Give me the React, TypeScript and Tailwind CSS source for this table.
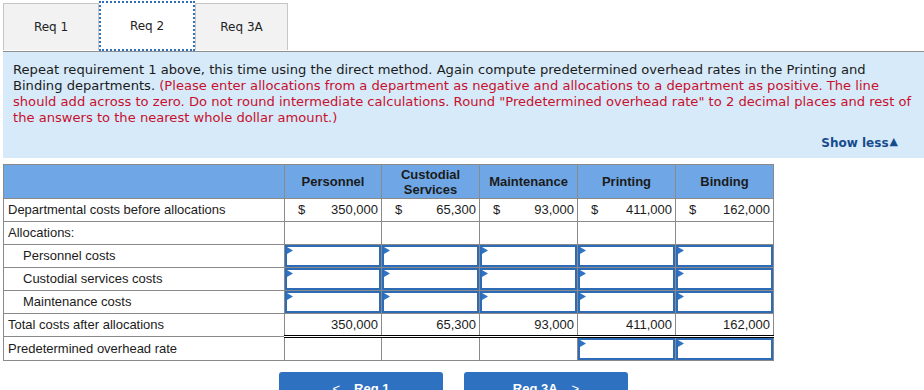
import React from "react";

const verdana = { fontFamily: '"DejaVu Sans", Verdana, sans-serif' };
const arial = { fontFamily: '"Liberation Sans", Arial, sans-serif' };

const depts = ["Personnel", "Custodial Services", "Maintenance", "Printing", "Binding"];
const before = ["350,000", "65,300", "93,000", "411,000", "162,000"];

function Flag() {
  return (
    <svg className="absolute left-0 top-0" width="6" height="7" viewBox="0 0 6 7">
      <polygon points="0,0 6,3.5 0,7" fill="#2f73c4" />
    </svg>
  );
}

function InputCell() {
  return (
    <td className="border border-[#8a8a8a] p-0">
      <div className="relative h-[22px] border-2 border-[#2e6bb7] bg-white">
        <Flag />
      </div>
    </td>
  );
}

function Label({ text, indent }: { text: string; indent?: boolean }) {
  return (
    <td className={`border border-[#8a8a8a] h-[23px] ${indent ? "pl-[19px]" : "pl-[4px]"}`}>
      {text}
    </td>
  );
}

export default function App() {
  return (
    <div className="w-[924px] h-[390px] overflow-hidden bg-white text-[#222]">
      {/* tabs */}
      <div className="flex pl-[3px] pt-[3px] text-[12px]" style={verdana}>
        <div className="flex h-[47px] w-[96px] items-center justify-center border-x border-t border-[#c6c6c6] bg-[#f2f2f2]">
          Req 1
        </div>
        <div className="-mt-[2px] flex h-[50px] w-[96px] items-center justify-center border-2 border-dotted border-[#2f6fc0] bg-white">
          Req 2
        </div>
        <div className="flex h-[47px] w-[93px] items-center justify-center border-x border-t border-[#c6c6c6] bg-[#f2f2f2]">
          Req 3A
        </div>
      </div>

      {/* instructions */}
      <div className="ml-[3px] h-[107px] border-t border-[#8f8f8f] bg-[#d6eaf9] pl-[10px] pt-[10px]" style={verdana}>
        <p className="whitespace-nowrap text-[13.1px] leading-[16px] text-[#1b1b1b]">
          Repeat requirement 1 above, this time using the direct method. Again compute predetermined overhead rates in the Printing and
          <br />
          Binding departments.{" "}
          <span className="text-[#c8102e]">
            (Please enter allocations from a department as negative and allocations to a department as positive. The line
            <br />
            should add across to zero. Do not round intermediate calculations. Round "Predetermined overhead rate" to 2 decimal places and rest of
            <br />
            the answers to the nearest whole dollar amount.)
          </span>
        </p>
        <div className="mt-[8px] flex justify-end pr-[26px] text-[12px] font-bold text-[#174c8c]">
          Show less<span className="ml-[1px] text-[11px]">▲</span>
        </div>
      </div>

      {/* table */}
      <table className="ml-[3px] mt-[6px] border-collapse text-[13px] text-[#1b1b1b]" style={arial}>
        <colgroup>
          <col className="w-[281px]" />
          <col className="w-[97px]" />
          <col className="w-[98px]" />
          <col className="w-[98px]" />
          <col className="w-[98px]" />
          <col className="w-[98px]" />
        </colgroup>
        <thead>
          <tr className="h-[34px] bg-[#6fa7e6]">
            <th className="border border-[#8a8a8a]" />
            {depts.map((d) => (
              <th key={d} className="border border-[#8a8a8a] px-1 text-center text-[13px] font-bold leading-[15px]">
                {d === "Custodial Services" ? (
                  <>
                    Custodial
                    <br />
                    Services
                  </>
                ) : (
                  d
                )}
              </th>
            ))}
          </tr>
        </thead>
        <tbody>
          <tr>
            <Label text="Departmental costs before allocations" />
            {before.map((v) => (
              <td key={v} className="border border-[#8a8a8a] pl-[13px] pr-[3px]">
                <div className="flex justify-between">
                  <span>$</span>
                  <span>{v}</span>
                </div>
              </td>
            ))}
          </tr>
          <tr>
            <Label text="Allocations:" />
            {before.map((v) => (
              <td key={v} className="border border-[#8a8a8a]" />
            ))}
          </tr>
          {["Personnel costs", "Custodial services costs", "Maintenance costs"].map((l) => (
            <tr key={l}>
              <Label text={l} indent />
              {before.map((v) => (
                <InputCell key={v} />
              ))}
            </tr>
          ))}
          <tr>
            <Label text="Total costs after allocations" />
            {before.map((v) => (
              <td
                key={v}
                className="border border-[#8a8a8a] border-t-black border-b-[3px] border-b-black border-double pr-[3px] text-right"
                style={{ borderTopStyle: "solid", borderLeftStyle: "solid", borderRightStyle: "solid" }}
              >
                {v}
              </td>
            ))}
          </tr>
          <tr>
            <Label text="Predetermined overhead rate" />
            <td className="border border-[#8a8a8a]" />
            <td className="border border-[#8a8a8a]" />
            <td className="border border-[#8a8a8a]" />
            <InputCell />
            <InputCell />
          </tr>
        </tbody>
      </table>

      {/* nav buttons */}
      <div className="mt-[11px] flex gap-[21px] pl-[279px] text-[13px] font-bold text-white" style={arial}>
        <div className="flex h-[34px] w-[164px] items-start justify-center gap-[14px] rounded-t-[3px] bg-[#2f71c1] pt-[7px]">
          <span className="font-normal">&lt;</span>
          <span>Req 1</span>
        </div>
        <div className="flex h-[34px] w-[164px] items-start justify-center gap-[14px] rounded-t-[3px] bg-[#2f71c1] pt-[7px]">
          <span>Req 3A</span>
          <span className="font-normal">&gt;</span>
        </div>
      </div>
    </div>
  );
}
